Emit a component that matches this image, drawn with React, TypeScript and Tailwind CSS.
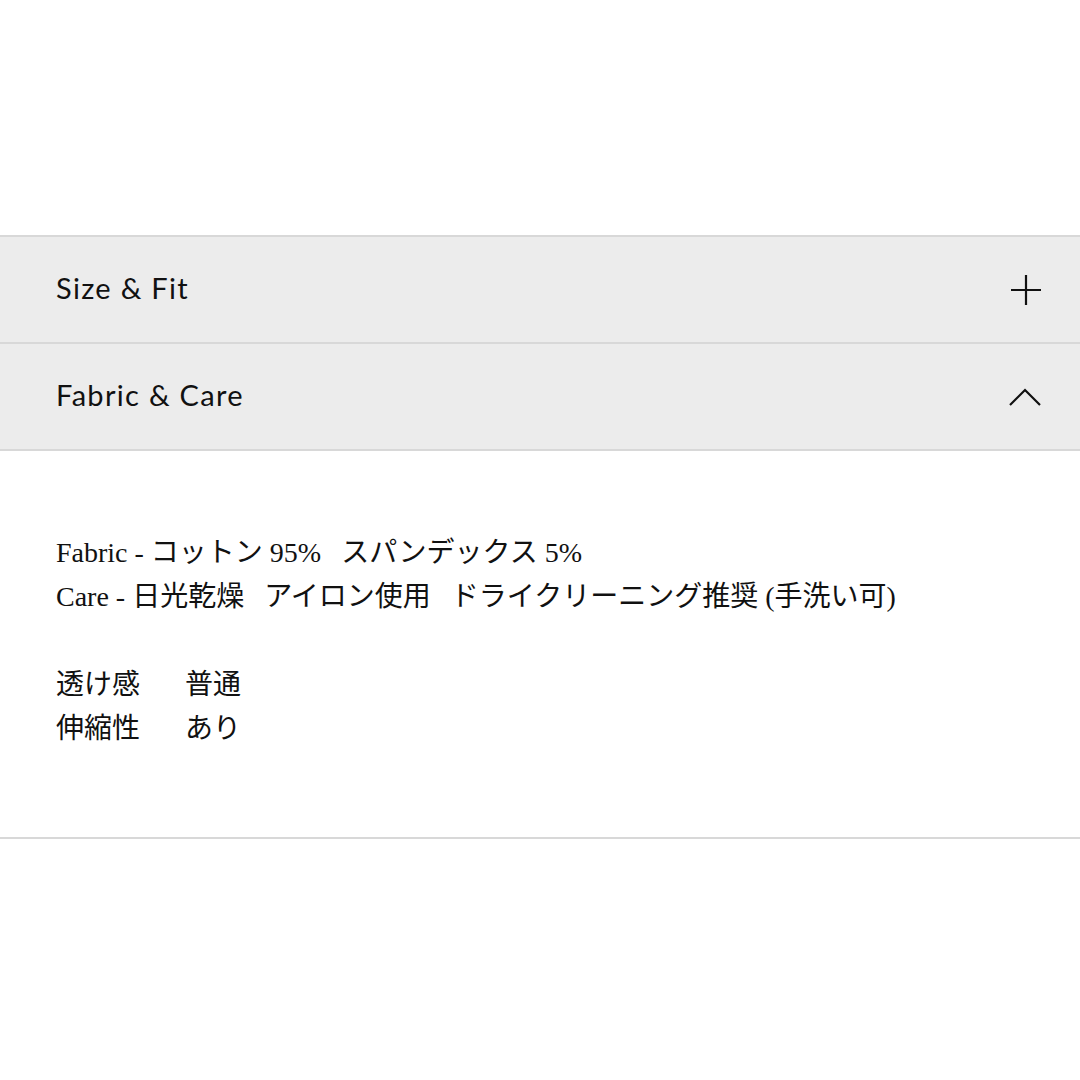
import { useState } from "react";

const serif = "font-['Liberation_Serif','Noto_Sans_CJK_JP',serif]";

function PlusIcon() {
  return (
    <svg width="32" height="32" viewBox="0 0 32 32" fill="none" stroke="#111" strokeWidth="2.2">
      <path d="M16 1v30M1 16h30" />
    </svg>
  );
}

function ChevronUp() {
  return (
    <svg width="34" height="18" viewBox="0 0 34 18" fill="none" stroke="#111" strokeWidth="2.2">
      <path d="M2 17L17 2l15 15" />
    </svg>
  );
}

export default function App() {
  const [open, setOpen] = useState<string | null>("fabric");

  const sections = [
    { id: "size", title: "Size & Fit" },
    { id: "fabric", title: "Fabric & Care" },
  ];

  return (
    <div className="w-[1080px] h-[1080px] bg-white text-[#111] pt-[235px]">
      <div className="border-t-2 border-[#d8d8d8]">
        {sections.map((s) => (
          <div key={s.id}>
            <button
              onClick={() => setOpen(open === s.id ? null : s.id)}
              className="w-full h-[107px] flex items-center justify-between pl-[56px] pr-[38px] bg-[#ececec] border-b-2 border-[#d8d8d8]"
            >
              <span className="font-['Lato',sans-serif] text-[29px] tracking-[1.3px] text-[#111] -mt-[3px]">
                {s.title}
              </span>
              {open === s.id ? <ChevronUp /> : <PlusIcon />}
            </button>
            {open === s.id && s.id === "fabric" && (
              <div className={`pl-[56px] pt-[80px] pb-[86px] border-b-2 border-[#d8d8d8] text-[28px] leading-[44px] ${serif}`}>
                <p>Fabric - コットン 95%<span className="inline-block w-[20px]" />スパンデックス 5%</p>
                <p>Care - 日光乾燥<span className="inline-block w-[20px]" />アイロン使用<span className="inline-block w-[20px]" />ドライクリーニング推奨 (手洗い可)</p>
                <div className="h-[44px]" />
                <div className="grid grid-cols-[129px_1fr]">
                  <span>透け感</span>
                  <span>普通</span>
                  <span>伸縮性</span>
                  <span>あり</span>
                </div>
              </div>
            )}
          </div>
        ))}
      </div>
    </div>
  );
}
